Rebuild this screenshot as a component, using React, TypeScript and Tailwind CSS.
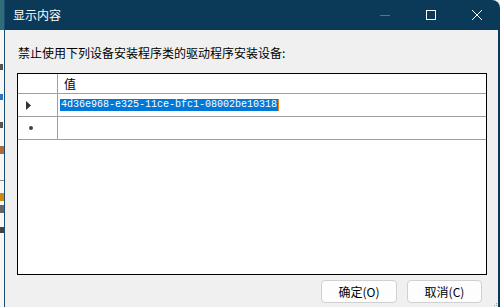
const cjk = { fontFamily: '"Noto Sans CJK SC", "Microsoft YaHei", sans-serif' };

function CaptionButtons() {
  return (
    <div className="ml-auto flex h-full">
      {/* minimize, disabled */}
      <div className="w-[46px] h-full flex items-center justify-center">
        <svg width="10" height="10" viewBox="0 0 10 10">
          <path d="M0 5.5h10" stroke="#4f7590" strokeWidth="1" />
        </svg>
      </div>
      <div className="w-[46px] h-full flex items-center justify-center">
        <svg width="10" height="10" viewBox="0 0 10 10">
          <rect x="0.5" y="0.5" width="9" height="9" fill="none" stroke="#ffffff" strokeWidth="1" />
        </svg>
      </div>
      <div className="w-[46px] h-full flex items-center justify-center">
        <svg width="10" height="10" viewBox="0 0 10 10">
          <path d="M0 0L10 10M10 0L0 10" stroke="#ffffff" strokeWidth="1" />
        </svg>
      </div>
    </div>
  );
}

export default function App() {
  return (
    <div className="w-[500px] h-[307px] flex overflow-hidden bg-[#f0f0f0]" style={cjk}>
      {/* background window peeking out on the left */}
      <div className="w-[4px] h-full flex flex-col bg-[#f7f7f7]">
        <div className="h-[30px] bg-[#2f6e78]" />
        <div className="h-[6px] mt-[34px] w-[3px] bg-[#555]" />
        <div className="h-[6px] mt-[24px] w-[3px] bg-[#2b73c4]" />
        <div className="h-[6px] mt-[22px] w-[3px] bg-[#555]" />
        <div className="h-[8px] mt-[18px] w-[4px] bg-[#b06a3a]" />
        <div className="h-[1px] mt-[26px] w-[4px] bg-[#888]" />
        <div className="h-[8px] mt-[12px] w-[4px] bg-[#d08a10]" />
        <div className="h-[8px] mt-[4px] w-[4px] bg-[#666]" />
        <div className="h-[6px] mt-[14px] w-[4px] bg-[#444]" />
      </div>

      {/* dialog */}
      <div className="flex-1 flex flex-col border-l border-[#1b4d74] rounded-tr-[8px] overflow-hidden">
        <div className="h-[30px] shrink-0 bg-[#0b3a59] flex items-center pl-[8px] text-white text-[12px]">
          <span>显示内容</span>
          <CaptionButtons />
        </div>

        <div className="flex-1 flex flex-col bg-[#f0f0f0] border-r-2 border-[#0b3a59] relative">
          <div className="pt-[15px] pl-[13px] text-[12px] leading-[16px] text-black">
            禁止使用下列设备安装程序类的驱动程序安装设备:
          </div>

          {/* data grid */}
          <div className="mt-[12px] ml-[12px] w-[470px] h-[202px] border border-black bg-white flex flex-col">
            <div className="flex h-[20px] border-b border-[#a0a0a0]">
              <div className="w-[40px] border-r border-[#a0a0a0]" />
              <div className="pl-[6px] text-[12px] leading-[19px] text-black">值</div>
            </div>
            <div className="flex h-[23px] border-b border-[#a0a0a0]">
              <div className="w-[40px] border-r border-[#a0a0a0] flex items-center pl-[8px]">
                <svg width="5" height="9" viewBox="0 0 5 9">
                  <path d="M0 0L5 4.5L0 9Z" fill="#333" />
                </svg>
              </div>
              <div className="flex items-center pl-[2px]">
                <span
                  className="bg-[#0078d7] text-white text-[10px] leading-[12px] px-[1px]"
                  style={{ fontFamily: '"Liberation Mono", monospace' }}
                >
                  4d36e968-e325-11ce-bfc1-08002be10318
                </span>
                <span className="w-[1px] h-[12px] bg-[#e8861a]" />
              </div>
            </div>
            <div className="flex h-[23px] border-b border-[#a0a0a0]">
              <div className="w-[40px] border-r border-[#a0a0a0] flex items-center pl-[11px]">
                <span className="w-[4px] h-[4px] rounded-full bg-[#444]" />
              </div>
            </div>
          </div>

          {/* buttons */}
          <div className="flex justify-end gap-[10px] mt-[5px] pr-[16px]">
            <button className="w-[76px] h-[23px] bg-[#fdfdfd] border border-[#d0d0d0] rounded-[4px] text-[12px] text-black">
              确定(O)
            </button>
            <button className="w-[75px] h-[23px] bg-[#fdfdfd] border border-[#d0d0d0] rounded-[4px] text-[12px] text-black">
              取消(C)
            </button>
          </div>

          {/* size grip */}
          <div className="absolute right-[1px] bottom-[1px] grid grid-cols-2 gap-[1px]">
            <span />
            <span className="w-[1px] h-[1px] bg-[#a0a0a0]" />
            <span className="w-[1px] h-[1px] bg-[#a0a0a0]" />
            <span className="w-[1px] h-[1px] bg-[#a0a0a0]" />
          </div>
        </div>
      </div>
    </div>
  );
}
